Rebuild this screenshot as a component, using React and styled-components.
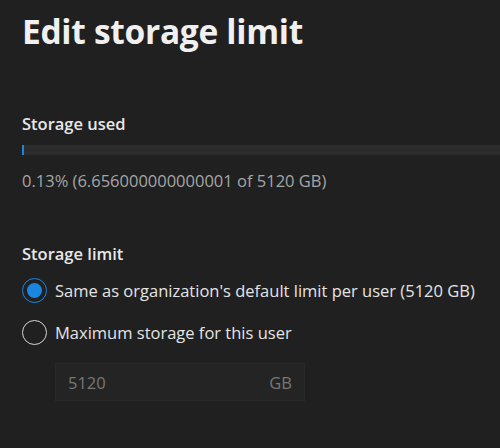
import React, { useState } from "react";
import styled, { createGlobalStyle } from "styled-components";

const GlobalStyle = createGlobalStyle`
  html, body {
    margin: 0;
    padding: 0;
    background: #202020;
  }
  body {
    font-family: "Open Sans", "Noto Sans", "Liberation Sans", sans-serif;
    color: #e6e6e6;
    overflow: hidden;
  }
`;

const Page = styled.div`
  width: 500px;
  height: 448px;
  box-sizing: border-box;
  padding: 0 0 0 22px;
  overflow: hidden;
`;

const Title = styled.h1`
  margin: 0;
  padding-top: 9px;
  font-size: 33.5px;
  font-weight: 700;
  line-height: 44px;
  color: #f0f0f0;
  letter-spacing: -0.3px;
`;

const Section = styled.section`
  margin-top: ${({ $top }) => $top}px;
`;

const Label = styled.h2`
  margin: 0;
  font-size: 16.5px;
  font-weight: 600;
  line-height: 24px;
  color: #e8e8e8;
`;

const Bar = styled.div`
  margin-top: 9px;
  width: 520px;
  height: 10px;
  background: #2c2c2c;
`;

const Fill = styled.div`
  height: 100%;
  background: #1a86e0;
`;

const Usage = styled.p`
  margin: 14px 0 0;
  font-size: 16.5px;
  line-height: 24px;
  color: #a6a6a6;
`;

const Options = styled.div`
  margin-top: 12px;
  display: flex;
  flex-direction: column;
  gap: 17px;
`;

const Option = styled.label`
  display: flex;
  align-items: center;
  gap: 8px;
  cursor: pointer;
  font-size: 16.5px;
  line-height: 24px;
  color: #e4e4e4;
`;

const Radio = styled.span`
  box-sizing: border-box;
  width: 25px;
  height: 25px;
  border-radius: 50%;
  border: 1.5px solid ${({ $checked }) => ($checked ? "#1a86e0" : "#d6d6d6")};
  display: flex;
  align-items: center;
  justify-content: center;
  flex-shrink: 0;

  &::after {
    content: "";
    width: 15px;
    height: 15px;
    border-radius: 50%;
    background: #1a86e0;
    display: ${({ $checked }) => ($checked ? "block" : "none")};
  }
`;

const Field = styled.div`
  margin: 18px 0 0 33px;
  width: 250px;
  height: 38px;
  box-sizing: border-box;
  display: flex;
  align-items: center;
  justify-content: space-between;
  padding: 0 12px;
  background: #242424;
  border: 1px solid #292929;
  font-size: 16.5px;
  color: #777777;
`;

export default function App() {
  const [mode, setMode] = useState("default");
  const used = 6.656000000000001;
  const total = 5120;
  const pct = (used / total) * 100;

  return (
    <Page>
      <GlobalStyle />
      <Title>Edit storage limit</Title>

      <Section $top={59}>
        <Label>Storage used</Label>
        <Bar>
          <Fill style={{ width: `${Math.max(pct, 0.4)}%` }} />
        </Bar>
        <Usage>
          {pct.toFixed(2)}% ({used} of {total} GB)
        </Usage>
      </Section>

      <Section $top={49}>
        <Label>Storage limit</Label>
        <Options>
          <Option onClick={() => setMode("default")}>
            <Radio $checked={mode === "default"} />
            Same as organization's default limit per user (5120 GB)
          </Option>
          <Option onClick={() => setMode("custom")}>
            <Radio $checked={mode === "custom"} />
            Maximum storage for this user
          </Option>
        </Options>
        <Field>
          <span>5120</span>
          <span>GB</span>
        </Field>
      </Section>
    </Page>
  );
}
